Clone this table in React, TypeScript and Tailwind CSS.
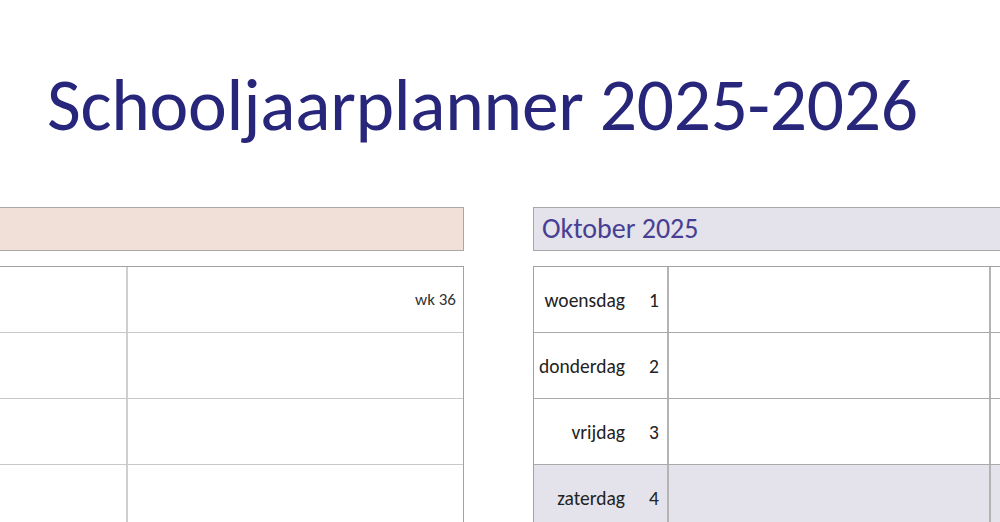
const FONT = { fontFamily: "Carlito, Calibri, Lato, 'Liberation Sans', sans-serif" };

const LEFT_ROWS = [{ wk: "wk 36" }, { wk: "" }, { wk: "" }, { wk: "" }];

const OCT_ROWS = [
  { day: "woensdag", n: 1, weekend: false },
  { day: "donderdag", n: 2, weekend: false },
  { day: "vrijdag", n: 3, weekend: false },
  { day: "zaterdag", n: 4, weekend: true },
];

export default function App() {
  return (
    <div className="w-[1000px] h-[522px] overflow-hidden bg-white" style={FONT}>
      {/* Title */}
      <h1 className="pl-[47px] pt-[65px] h-[207px] text-[73.5px] leading-[80px] text-[#28267a] tracking-[-0.3px]">
        Schooljaarplanner 2025-2026
      </h1>

      <div className="flex">
        {/* September (cut off on the left) */}
        <div className="ml-[-8px] w-[472px] shrink-0">
          <div className="h-[44px] bg-[#f0e0d8] border border-[#a8a8a8]" />
          <div className="mt-[15px] border-t border-l border-r border-[#a2a2a2]">
            {LEFT_ROWS.map((r, i) => (
              <div key={i} className="flex h-[66px] border-b border-[#c8c8c8]">
                <div className="w-[135px] border-r-2 border-[#cfcfcf]" />
                <div className="flex-1 flex items-center justify-end pr-[7px] text-[17px] text-[#333]">
                  {r.wk}
                </div>
              </div>
            ))}
          </div>
        </div>

        {/* Oktober */}
        <div className="ml-[69px] flex-1">
          <div className="h-[44px] bg-[#e4e2ea] border border-[#a8a8a8] border-r-0 flex items-center pl-[8px] text-[28px] text-[#473f92]">
            Oktober 2025
          </div>
          <div className="mt-[15px] border-t border-l border-[#a2a2a2]">
            {OCT_ROWS.map((r) => (
              <div
                key={r.n}
                className={`flex h-[66px] border-b border-[#a9a9a9] ${r.weekend ? "bg-[#e4e2ea]" : "bg-white"}`}
              >
                <div className="w-[135px] flex items-center pt-[3px] border-r-2 border-[#b4b4b4] text-[19.5px] text-[#222]">
                  <span className="flex-1 text-right pr-[13px]">{r.day}</span>
                  <span className="w-[29px] text-right pr-[8px]">{r.n}</span>
                </div>
                <div className="w-[322px] border-r-2 border-[#b4b4b4]" />
                <div className="flex-1" />
              </div>
            ))}
          </div>
        </div>
      </div>
    </div>
  );
}
